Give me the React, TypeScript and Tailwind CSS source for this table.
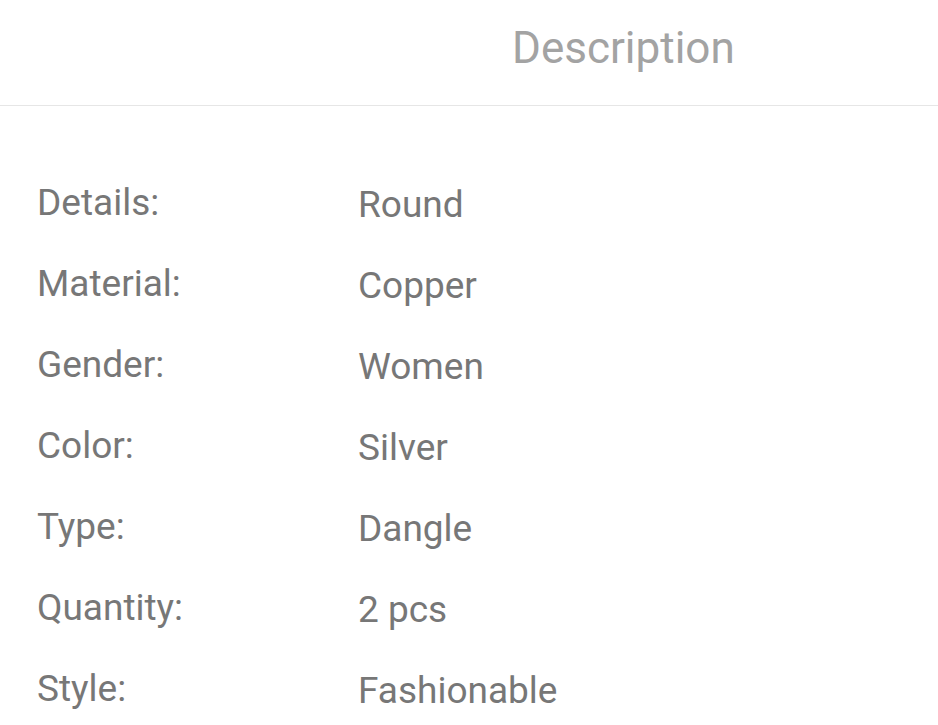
import React from "react";

const specs: [string, string][] = [
    ["Details:", "Round"],
    ["Material:", "Copper"],
    ["Gender:", "Women"],
    ["Color:", "Silver"],
    ["Type:", "Dangle"],
    ["Quantity:", "2 pcs"],
    ["Style:", "Fashionable"],
];

export default function App() {
    return (
        <div className="w-[938px] h-[725px] overflow-hidden bg-white" style={{ fontFamily: "Roboto, 'Noto Sans', sans-serif" }}>
            <div className="h-[106px] border-b border-[#e6e6e6] flex items-center pl-[512px] pb-[10px]">
                <span className="text-[44px] text-[#a3a3a3] leading-none">Description</span>
            </div>
            <div className="pt-[56px] pl-[37px]">
                {specs.map(([label, value]) => (
                    <div key={label} className="flex h-[81px] items-center text-[37px] text-[#777777]">
                        <span className="w-[321px]">{label}</span>
                        <span className="pt-[5px]">{value}</span>
                    </div>
                ))}
            </div>
        </div>
    );
}
